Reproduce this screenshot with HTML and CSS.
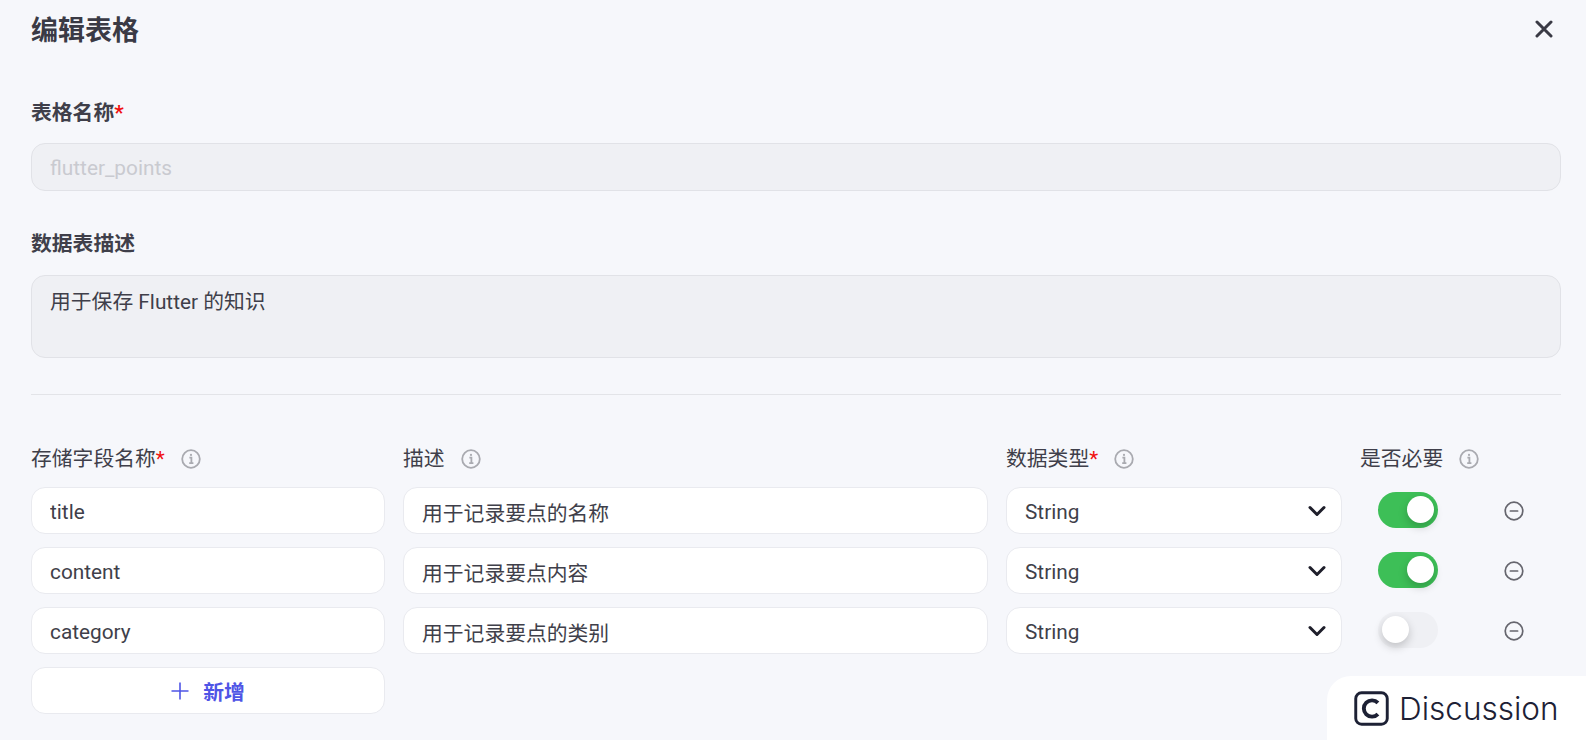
FILE: index.html
```html
<!DOCTYPE html>
<html lang="zh-CN">
<head>
  <meta charset="UTF-8">
  <title>编辑表格</title>
  <link rel="stylesheet" href="styles.css">
</head>
<body>

  <div class="dialog">
    <!-- Header -->
    <div class="head">
      <h1>编辑表格</h1>
      <svg class="close" viewBox="0 0 18 18"><path d="M2 2L16 16M16 2L2 16"/></svg>
    </div>

    <!-- Table info -->
    <label class="label">表格名称<span class="req">*</span></label>
    <input class="input disabled" value="flutter_points" disabled>

    <label class="label second">数据表描述</label>
    <textarea class="input disabled area" readonly>用于保存 Flutter 的知识</textarea>

    <div class="line"></div>

    <!-- Fields -->
    <div class="grid">
      <div class="col-label">存储字段名称<span class="req">*</span>
        <svg class="info" viewBox="0 0 20 20"><circle cx="10" cy="10" r="8.8"/><path d="M8.4 8.6H10.4V14M8.2 14.2H12.4"/><circle class="dot" cx="10" cy="5.9" r="1.1"/></svg>
      </div>
      <div class="col-label">描述
        <svg class="info" viewBox="0 0 20 20"><circle cx="10" cy="10" r="8.8"/><path d="M8.4 8.6H10.4V14M8.2 14.2H12.4"/><circle class="dot" cx="10" cy="5.9" r="1.1"/></svg>
      </div>
      <div class="col-label">数据类型<span class="req">*</span>
        <svg class="info" viewBox="0 0 20 20"><circle cx="10" cy="10" r="8.8"/><path d="M8.4 8.6H10.4V14M8.2 14.2H12.4"/><circle class="dot" cx="10" cy="5.9" r="1.1"/></svg>
      </div>
      <div class="col-label">是否必要
        <svg class="info" viewBox="0 0 20 20"><circle cx="10" cy="10" r="8.8"/><path d="M8.4 8.6H10.4V14M8.2 14.2H12.4"/><circle class="dot" cx="10" cy="5.9" r="1.1"/></svg>
      </div>
      <div></div>

      <input class="input" value="title">
      <input class="input" value="用于记录要点的名称">
      <div class="select">String
        <svg class="chevron" viewBox="0 0 18 12"><path d="M2 2.5L9 9.5L16 2.5"/></svg>
      </div>
      <div class="toggle-cell"><span class="toggle on"><span class="knob"></span></span></div>
      <svg class="minus" viewBox="0 0 20 20"><circle cx="10" cy="10" r="8.8"/><path d="M6.4 10H13.6"/></svg>

      <input class="input" value="content">
      <input class="input" value="用于记录要点内容">
      <div class="select">String
        <svg class="chevron" viewBox="0 0 18 12"><path d="M2 2.5L9 9.5L16 2.5"/></svg>
      </div>
      <div class="toggle-cell"><span class="toggle on"><span class="knob"></span></span></div>
      <svg class="minus" viewBox="0 0 20 20"><circle cx="10" cy="10" r="8.8"/><path d="M6.4 10H13.6"/></svg>

      <input class="input" value="category">
      <input class="input" value="用于记录要点的类别">
      <div class="select">String
        <svg class="chevron" viewBox="0 0 18 12"><path d="M2 2.5L9 9.5L16 2.5"/></svg>
      </div>
      <div class="toggle-cell"><span class="toggle"><span class="knob"></span></span></div>
      <svg class="minus" viewBox="0 0 20 20"><circle cx="10" cy="10" r="8.8"/><path d="M6.4 10H13.6"/></svg>

      <button class="add">
        <svg viewBox="0 0 18 18"><path d="M9 0.5V17.5M0.5 9H17.5"/></svg>
        新增
      </button>
    </div>
  </div>

  <!-- Floating link -->
  <div class="discussion">
    <svg viewBox="0 0 36 36"><rect x="1.8" y="1.8" width="32.4" height="32.4" rx="6"/><path class="letter" d="M24.6 12.2A8.4 8.4 0 1 0 24.6 23.8"/></svg>
    Discussion
  </div>

</body>
</html>
```

FILE: styles.css
```css
* {
  box-sizing: border-box;
}

html, body {
  height: 100%;
}

body {
  margin: 0;
  background-color: #f6f7fb;
  color: #3f3f4a;
  font-family: Roboto, "Noto Sans CJK SC", sans-serif;
  overflow: hidden;
}

.dialog {
  padding: 0 25px 0 31px;
}

.head {
  display: flex;
  align-items: center;
  justify-content: space-between;
  height: 61px;
  padding-right: 8px;
}

h1 {
  margin: 0;
  padding-top: 2px;
  font-size: 27px;
  font-weight: 700;
  line-height: 59px;
  color: #3a3a45;
}

.close {
  width: 18px;
  height: 18px;
  margin-top: -3px;
  fill: none;
  stroke: #3a3a45;
  stroke-width: 3;
  stroke-linecap: round;
}

.label {
  display: block;
  margin-top: 37px;
  margin-bottom: 14px;
  font-size: 20.8px;
  font-weight: 700;
  line-height: 31px;
}

.label.second {
  margin-top: 38px;
  margin-bottom: 15px;
}

.req {
  color: #f01010;
}

.input {
  display: block;
  width: 100%;
  height: 47px;
  padding: 2px 18px 0;
  border: 1px solid #e9eaef;
  border-radius: 14px;
  background-color: #fff;
  color: #3f3f4a;
  font-family: inherit;
  font-size: 20.8px;
  outline: none;
}

.disabled {
  height: 48px;
  background-color: #eff0f4;
  border-color: #e1e2e7;
}

input.disabled {
  color: #c9cad0;
}

.area {
  height: 83px;
  padding-top: 11px;
  resize: none;
  line-height: 30px;
}

.line {
  height: 1px;
  margin-top: 36px;
  background-color: #e3e4e8;
}

.grid {
  display: grid;
  grid-template-columns: 354px 585px 336px 116px 1fr;
  column-gap: 18px;
  row-gap: 13px;
  align-items: center;
  margin-top: 47px;
}

.col-label {
  display: flex;
  align-items: center;
  height: 32px;
  padding-top: 1px;
  font-size: 20.8px;
  line-height: 32px;
  white-space: nowrap;
}

.info {
  flex-shrink: 0;
  width: 20px;
  height: 20px;
  margin-left: 16px;
  fill: none;
  stroke: #a9aab0;
  stroke-width: 1.8;
}

.info .dot {
  fill: #a9aab0;
  stroke: none;
}

.select {
  position: relative;
  display: flex;
  align-items: center;
  height: 47px;
  padding: 3px 18px 0;
  border: 1px solid #e9eaef;
  border-radius: 14px;
  background-color: #fff;
  font-size: 20.8px;
}

.chevron {
  position: absolute;
  right: 15px;
  top: 17px;
  width: 18px;
  height: 12px;
  fill: none;
  stroke: #1f1f2b;
  stroke-width: 3;
  stroke-linecap: round;
  stroke-linejoin: round;
}

.toggle-cell {
  display: flex;
  margin-bottom: 2px;
  padding-left: 18px;
}

.toggle {
  display: flex;
  align-items: center;
  justify-content: flex-start;
  width: 60px;
  height: 36px;
  padding: 0 4px;
  border-radius: 18px;
  background-color: #eff0f4;
}

.toggle.on {
  justify-content: flex-end;
  background-color: #3dbf57;
}

.knob {
  width: 27px;
  height: 27px;
  border-radius: 50%;
  background-color: #fff;
  box-shadow: 0 4px 10px rgba(0, 0, 0, 0.2);
}

.minus {
  width: 20px;
  height: 20px;
  margin-left: 10px;
  fill: none;
  stroke: #66666e;
  stroke-width: 1.7;
  stroke-linecap: round;
}

.add {
  display: flex;
  align-items: center;
  justify-content: center;
  gap: 14px;
  height: 47px;
  padding-top: 2px;
  border: 1px solid #e9eaef;
  border-radius: 14px;
  background-color: #fff;
  color: #4f55e6;
  font-family: inherit;
  font-size: 20.8px;
  font-weight: 700;
}

.add svg {
  width: 18px;
  height: 18px;
  fill: none;
  stroke: #4f55e6;
  stroke-width: 1.6;
}

.discussion {
  position: absolute;
  right: 0;
  bottom: 0;
  display: flex;
  align-items: center;
  gap: 10px;
  width: 259px;
  height: 64px;
  padding-left: 27px;
  border-top-left-radius: 24px;
  background-color: #fff;
  color: #1d2135;
  font-family: Inter, sans-serif;
  font-size: 31.5px;
  font-weight: 300;
}

.discussion svg {
  width: 35px;
  height: 35px;
  fill: none;
  stroke: #1d2135;
  stroke-width: 3;
}

.discussion .letter {
  stroke-width: 4;
}
```
